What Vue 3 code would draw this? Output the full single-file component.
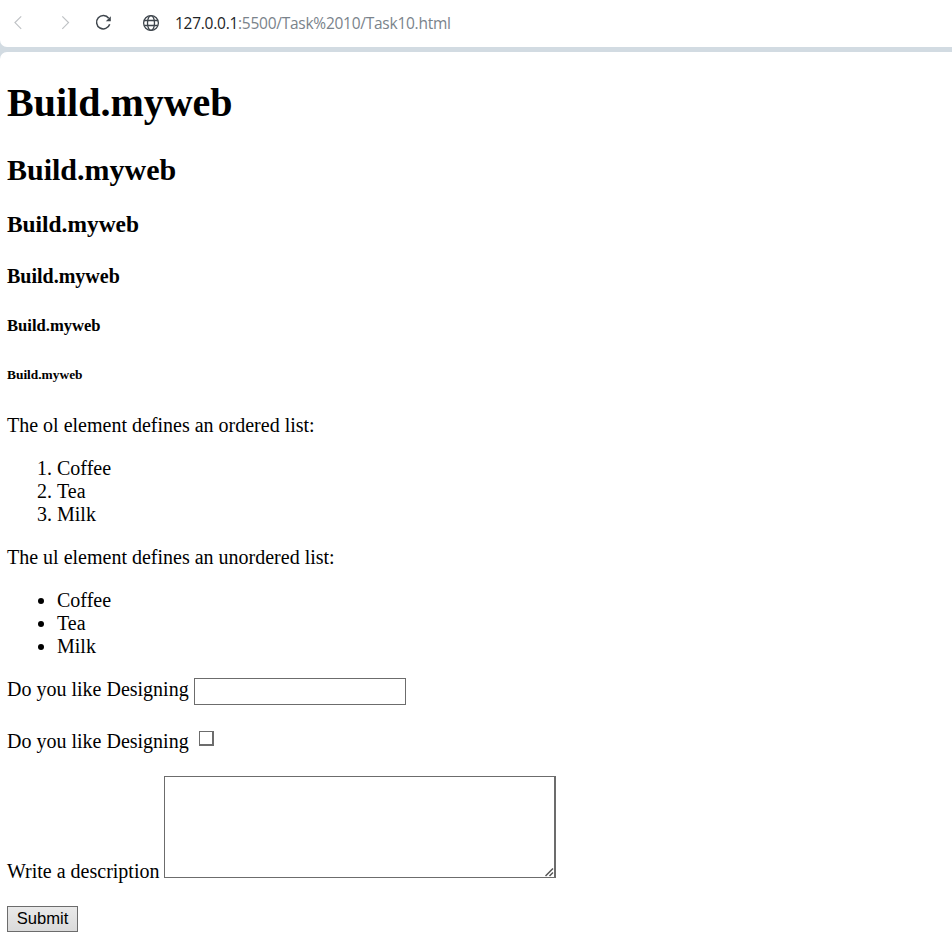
<script setup>
import { ref } from 'vue'

const drinks = ['Coffee', 'Tea', 'Milk']
const answer = ref('')
const likes = ref(false)
const description = ref('')
</script>

<template>
  <div class="window">
    <header class="toolbar">
      <svg class="nav" viewBox="0 0 170 47" width="170" height="47" fill="none">
        <path d="M21.200 16.300 15 22.600l6.200 6.300" stroke="#bfc2c5" stroke-width="1.200" />
        <path d="M62.300 16.300l6.200 6.300-6.200 6.300" stroke="#bfc2c5" stroke-width="1.200" />
        <path d="M108.700 18.200A6.700 6.700 0 1 0 109.700 24.200" stroke="#3f464d" stroke-width="1.500" />
        <path d="M110.800 16.200v5h-5z" fill="#3f464d" />
        <g stroke="#3f464d" stroke-width="1.300">
          <circle cx="151" cy="23" r="7.400" />
          <ellipse cx="151" cy="23" rx="3.500" ry="7.400" />
          <path d="M144.200 20.500h13.600M144.200 25.500h13.600" />
        </g>
      </svg>
      <div class="address"><span class="host">127.0.0.1</span>:5500/Task%2010/Task10.html</div>
    </header>
    <main class="page">
      <h1>Build.myweb</h1>
      <h2>Build.myweb</h2>
      <h3>Build.myweb</h3>
      <h4>Build.myweb</h4>
      <h5>Build.myweb</h5>
      <h6>Build.myweb</h6>
      <p>The ol element defines an ordered list:</p>
      <ol>
        <li v-for="drink in drinks" :key="drink">{{ drink }}</li>
      </ol>
      <p>The ul element defines an unordered list:</p>
      <ul>
        <li v-for="drink in drinks" :key="drink">{{ drink }}</li>
      </ul>
      <form @submit.prevent>
        <div class="row text-row">
          <label for="answer">Do you like Designing</label>
          <input id="answer" v-model="answer" class="field" type="text" />
        </div>
        <div class="row check-row">
          <label for="likes">Do you like Designing</label>
          <input id="likes" v-model="likes" class="check" type="checkbox" />
        </div>
        <div class="row area-row">
          <label for="description">Write a description</label>
          <div class="area">
            <textarea id="description" v-model="description"></textarea>
            <svg class="grip" viewBox="0 0 9 9" width="9" height="9" stroke="#555" stroke-width="1.500">
              <path d="M.5 8 8 .5M4.500 8 8 4.500" />
            </svg>
          </div>
        </div>
        <button type="submit">Submit</button>
      </form>
    </main>
  </div>
</template>

<style>
body {
  margin: 0;
  background: #fff;
}
</style>

<style scoped>
.window {
  box-sizing: border-box;
  width: 952px;
  height: 938px;
  overflow: hidden;
  background: #d2dbe2;
}
.toolbar {
  display: flex;
  height: 47px;
  margin-bottom: 5px;
  background: #fff;
  border-bottom-left-radius: 7px;
}
.nav {
  flex: none;
}
.address {
  padding-left: 5px;
  font: 15.5px/47px "Open Sans", "Noto Sans", sans-serif;
  letter-spacing: -0.26px;
  color: #7a838b;
  white-space: nowrap;
}
.host {
  color: #202326;
}
.page {
  box-sizing: border-box;
  height: 886px;
  padding: 28px 7px 0;
  background: #fff;
  border-top-left-radius: 7px;
  font: 20px/23px "Liberation Serif", "Times New Roman", serif;
  color: #000;
}
h1, h2, h3, h4, h5, h6, p, ol, ul {
  margin: 0;
}
h1 {
  font-size: 40px;
  line-height: 46px;
}
h2 {
  margin-top: 27px;
  font-size: 30px;
  line-height: 34px;
}
h3 {
  margin-top: 24px;
  font-size: 23.4px;
  line-height: 27px;
}
h4 {
  margin-top: 27px;
  font-size: 20px;
}
h5 {
  margin-top: 28px;
  font-size: 16.6px;
  line-height: 19px;
}
h6 {
  margin-top: 32px;
  margin-bottom: 32px;
  font-size: 13.4px;
  line-height: 15px;
}
ol, ul {
  margin: 20px 0;
  padding-left: 50px;
}
.row {
  display: flex;
}
.text-row {
  height: 27px;
}
.field {
  box-sizing: border-box;
  width: 212px;
  height: 27px;
  margin: 0 0 0 5px;
  padding: 1px 3px;
  border: 1px solid #6c6c6c;
  border-radius: 0;
  background: #fff;
}
.check-row {
  height: 23px;
  margin-top: 25px;
}
.check {
  appearance: none;
  box-sizing: border-box;
  width: 15px;
  height: 15px;
  margin: 1px 0 0 10px;
  border: solid #6c6c6c;
  border-width: 1px 2px 2px 1px;
  background: #fff;
}
.area-row {
  align-items: flex-end;
  height: 107px;
  margin-top: 23px;
}
.area {
  position: relative;
  width: 392px;
  height: 102px;
  margin: 0 0 5px 5px;
}
textarea {
  display: block;
  box-sizing: border-box;
  width: 100%;
  height: 100%;
  margin: 0;
  padding: 3px;
  border: 1px solid #6c6c6c;
  border-right-width: 2px;
  border-radius: 0;
  background: #fff;
  resize: none;
}
.grip {
  position: absolute;
  right: 2px;
  bottom: 1px;
}
button {
  display: block;
  box-sizing: border-box;
  width: 71px;
  height: 26px;
  margin: 23px 0 0;
  padding: 0 0 1px;
  border: 1px solid #6c6c6c;
  border-radius: 0;
  background: linear-gradient(#e9e9e9, #dadada);
  font: 16.6px/23px "Liberation Sans", Arial, sans-serif;
  color: #000;
}
</style>
